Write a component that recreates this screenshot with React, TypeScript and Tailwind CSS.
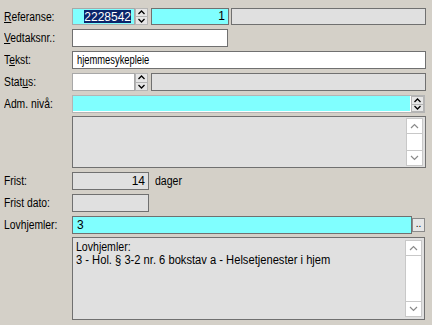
import React from "react";

const font = { fontFamily: '"Liberation Sans", Arial, sans-serif' };

function Spin({ h = 17 }: { h?: number }) {
  return (
    <div className="flex flex-col w-[13px] border border-[#b4b4b4] bg-[#b4b4b4] gap-px" style={{ height: h }}>
      <div className="flex-1 bg-[#e6e6e6] flex items-center justify-center">
        <svg width="7" height="5" viewBox="0 0 7 5"><path d="M0.5 4 L3.5 1 L6.5 4" fill="none" stroke="#000" strokeWidth="1.3" /></svg>
      </div>
      <div className="flex-1 bg-[#e6e6e6] flex items-center justify-center">
        <svg width="7" height="5" viewBox="0 0 7 5"><path d="M0.5 1 L3.5 4 L6.5 1" fill="none" stroke="#000" strokeWidth="1.3" /></svg>
      </div>
    </div>
  );
}

function Label({ children }: { children: React.ReactNode }) {
  return (
    <div className="w-[72px] pl-[4px] text-[12px] leading-[14px] text-black shrink-0 whitespace-nowrap">
      <span className="inline-block origin-left scale-x-[0.86]">{children}</span>
    </div>
  );
}

function VScroll({ h }: { h: number }) {
  return (
    <div className="w-[17px] border border-[#c8c8c8] bg-white flex flex-col" style={{ height: h }}>
      <div className="h-[15px] border-b border-[#c8c8c8] flex items-center justify-center">
        <svg width="9" height="6" viewBox="0 0 9 6"><path d="M1 5 L4.5 1.5 L8 5" fill="none" stroke="#8a8a8a" strokeWidth="1.2" /></svg>
      </div>
      <div className="flex-1" />
      <div className="h-[15px] border-t border-[#c8c8c8] flex items-center justify-center">
        <svg width="9" height="6" viewBox="0 0 9 6"><path d="M1 1 L4.5 4.5 L8 1" fill="none" stroke="#8a8a8a" strokeWidth="1.2" /></svg>
      </div>
    </div>
  );
}

export default function App() {
  return (
    <div className="w-[432px] h-[325px] bg-[#d4d0c8] overflow-hidden text-black" style={font}>
      <div className="flex flex-col pt-[8px]">
        {/* Referanse */}
        <div className="flex items-center h-[17px]">
          <Label><u>R</u>eferanse:</Label>
          <div className="flex h-[17px]">
            <div className="w-[63px] h-[17px] border border-[#a8a8a8] bg-[#80ffff] flex justify-end py-px pr-[2px]">
              <div className="h-full w-[48px] bg-[#0a246a] text-white text-[12px] leading-[14px] text-right border-r border-[#80ffff]">2228542</div>
            </div>
            <Spin />
          </div>
          <div className="ml-[3px] w-[78px] h-[17px] border border-[#707070] bg-[#80ffff] text-[12px] leading-[15px] text-right pr-[3px]">1</div>
          <div className="ml-[2px] w-[195px] h-[17px] border border-[#707070] bg-[#e0e0e0]" />
        </div>
        {/* Vedtaksnr */}
        <div className="flex items-center h-[18px] mt-[4px]">
          <Label><u>V</u>edtaksnr.:</Label>
          <div className="w-[156px] h-[18px] border border-[#707070] bg-white" />
        </div>
        {/* Tekst */}
        <div className="flex items-center h-[18px] mt-[4px]">
          <Label>T<u>e</u>kst:</Label>
          <div className="w-[354px] h-[18px] border border-[#707070] bg-white text-[12px] leading-[16px] pl-[4px] whitespace-nowrap">
            <span className="inline-block origin-left scale-x-[0.78]">hjemmesykepleie</span>
          </div>
        </div>
        {/* Status */}
        <div className="flex items-center h-[18px] mt-[4px]">
          <Label>Stat<u>u</u>s:</Label>
          <div className="flex h-[18px]">
            <div className="w-[63px] h-[18px] border border-[#a8a8a8] bg-white" />
            <Spin h={18} />
          </div>
          <div className="ml-[3px] w-[275px] h-[18px] border border-[#707070] bg-[#e0e0e0]" />
        </div>
        {/* Adm. nivå */}
        <div className="flex items-center h-[18px] mt-[4px]">
          <Label>Adm. nivå:</Label>
          <div className="flex h-[18px] w-[353px] border border-[#b4b4b4]">
            <div className="flex-1 bg-[#80ffff] border-b border-r border-white" />
            <Spin h={16} />
          </div>
        </div>
        {/* Listbox */}
        <div className="flex mt-[3px]">
          <div className="w-[72px] shrink-0" />
          <div className="w-[354px] h-[52px] border border-[#707070] bg-[#e0e0e0] flex justify-end items-center pr-[2px]">
            <VScroll h={48} />
          </div>
        </div>
        {/* Frist */}
        <div className="flex items-center h-[18px] mt-[4px]">
          <Label>Frist:</Label>
          <div className="w-[77px] h-[18px] border border-[#707070] bg-[#e0e0e0] text-[12px] leading-[16px] text-right pr-[3px]">14</div>
          <div className="ml-[6px] text-[12px] leading-[14px] whitespace-nowrap">
            <span className="inline-block origin-left scale-x-[0.88]">dager</span>
          </div>
        </div>
        {/* Frist dato */}
        <div className="flex items-center h-[18px] mt-[4px]">
          <Label>Frist dato:</Label>
          <div className="w-[77px] h-[18px] border border-[#707070] bg-[#e0e0e0]" />
        </div>
        {/* Lovhjemler */}
        <div className="flex items-center h-[18px] mt-[4px]">
          <Label>Lovhjemler:</Label>
          <div className="w-[340px] h-[18px] border border-[#707070] bg-[#80ffff] text-[12px] leading-[16px] pl-[4px]">3</div>
          <div className="w-[13px] h-[14px] border border-[#8a8a8a] bg-[#e6e6e6] text-[10px] leading-[10px] text-center">..</div>
        </div>
        {/* Textarea */}
        <div className="flex mt-[3px]">
          <div className="w-[72px] shrink-0" />
          <div className="w-[353px] h-[83px] border border-[#707070] bg-[#e0e0e0] flex justify-between pr-[2px] py-[2px]">
            <div className="text-[12px] leading-[13px] pl-[3px] pt-[1px] whitespace-nowrap">
              <div><span className="inline-block origin-left scale-x-[0.88]">Lovhjemler:</span></div>
              <div><span className="inline-block origin-left scale-x-[0.93]">3 - Hol. § 3-2 nr. 6 bokstav a - Helsetjenester i hjem</span></div>
            </div>
            <VScroll h={77} />
          </div>
        </div>
      </div>
    </div>
  );
}
